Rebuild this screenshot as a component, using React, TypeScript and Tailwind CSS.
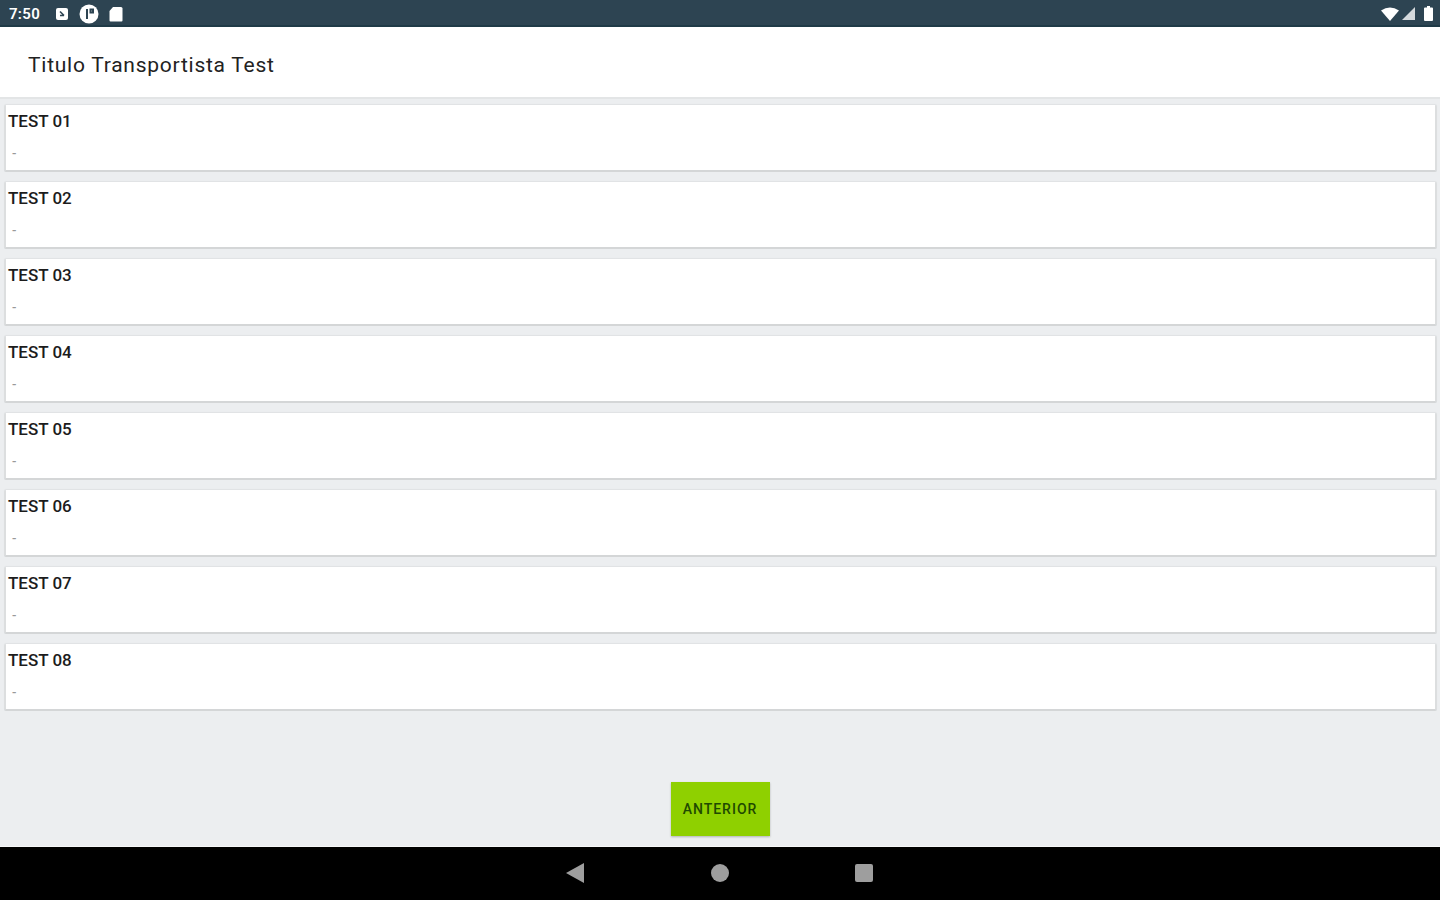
import { Circle, Square } from "lucide-react";

const items = ["TEST 01", "TEST 02", "TEST 03", "TEST 04", "TEST 05", "TEST 06", "TEST 07", "TEST 08"];

function StatusBar() {
  return (
    <div className="flex h-[27px] items-center justify-between border-b-2 border-[#1f3a47] bg-[#2d4452] pl-[9px] pr-[7px] pt-[2px] text-white">
      <div className="flex items-center">
        <span className="w-[32px] pt-[2px] text-[15px] font-semibold tracking-[0.3px] [font-family:Roboto,sans-serif]">7:50</span>
        <svg className="ml-[14px]" width="14" height="14" viewBox="0 0 14 14">
          <rect x="1" y="1" width="12" height="12" rx="2" fill="#fff" />
          <path d="M5 4.500l4 4M5 8.500h4" stroke="#2d4452" strokeWidth="1.6" />
        </svg>
        <svg className="ml-[10px]" width="20" height="20" viewBox="0 0 20 20">
          <circle cx="10" cy="10" r="9.500" fill="#fff" />
          <path d="M8 5v10M11.500 5.500h2.500v3h-2.500z" stroke="#2d4452" strokeWidth="2" fill="none" />
        </svg>
        <svg className="ml-[10px]" width="14" height="16" viewBox="0 0 14 16">
          <path d="M4 1h8a1.500 1.500 0 0 1 1.500 1.500v12a1 1 0 0 1-1 1h-11a1 1 0 0 1-1-1V5z" fill="#fff" />
        </svg>
      </div>
      <div className="flex items-center">
        <svg width="18" height="14" viewBox="0 0 18 14">
          <path d="M0 3.500Q9-2.500 18 3.500L9 14z" fill="#fff" />
        </svg>
        <svg className="ml-[3px] mr-[8px]" width="14" height="13" viewBox="0 0 14 13">
          <path d="M13 0v13H0z" fill="#d5dadd" />
        </svg>
        <svg width="9" height="15" viewBox="0 0 9 15">
          <path d="M3 0h3v1.500h2a1 1 0 0 1 1 1V14a1 1 0 0 1-1 1H1a1 1 0 0 1-1-1V2.500a1 1 0 0 1 1-1h2z" fill="#fff" />
        </svg>
      </div>
    </div>
  );
}

function NavBar() {
  return (
    <div className="flex h-[53px] items-center justify-center bg-black pb-[1px]">
      <svg className="-ml-[2px]" width="18" height="20" viewBox="0 0 18 20">
        <path d="M18 0v20L0 10z" fill="#9e9e9e" />
      </svg>
      <Circle className="ml-[127px]" size={18} fill="#9e9e9e" strokeWidth={0} viewBox="2 2 20 20" />
      <Square className="ml-[126px]" size={18} fill="#9e9e9e" strokeWidth={0} viewBox="3 3 18 18" />
    </div>
  );
}

export default function App() {
  return (
    <div className="flex h-[900px] w-[1440px] flex-col overflow-hidden bg-[#eceef0] [font-family:Roboto,sans-serif]">
      <StatusBar />
      <header className="flex h-[72px] items-center border-b-2 border-[#e3e5e6] bg-white pl-[28px] pt-[8px]">
        <h1 className="text-[21px] tracking-[0.75px] text-[#222]">Titulo Transportista Test</h1>
      </header>
      <main className="flex flex-1 flex-col gap-[10px] pl-[4px] pr-[3px] pt-[6px]">
        {items.map((item) => (
          <div
            key={item}
            className="h-[67px] rounded-[2px] border-x-2 border-b-2 border-x-[#dcdedf] border-b-[#d4d6d7] bg-white pl-[2px] pt-[5px] shadow-[0_-1px_1px_rgba(0,0,0,0.05)]"
          >
            <p className="text-[17px] leading-[22px] font-medium text-[#1c1c1c]">{item}</p>
            <p className="mt-[14px] pl-[4px] text-[13px] leading-[16px] font-medium text-[#999]">-</p>
          </div>
        ))}
      </main>
      <div className="flex justify-center border-b border-[#f7f8f8] pb-[10px]">
        <button className="h-[54px] w-[99px] bg-[#8fd000] text-[14px] font-medium tracking-[1px] text-[#1f4a00] shadow-[0_1px_2px_rgba(0,0,0,0.25)]">ANTERIOR</button>
      </div>
      <NavBar />
    </div>
  );
}
